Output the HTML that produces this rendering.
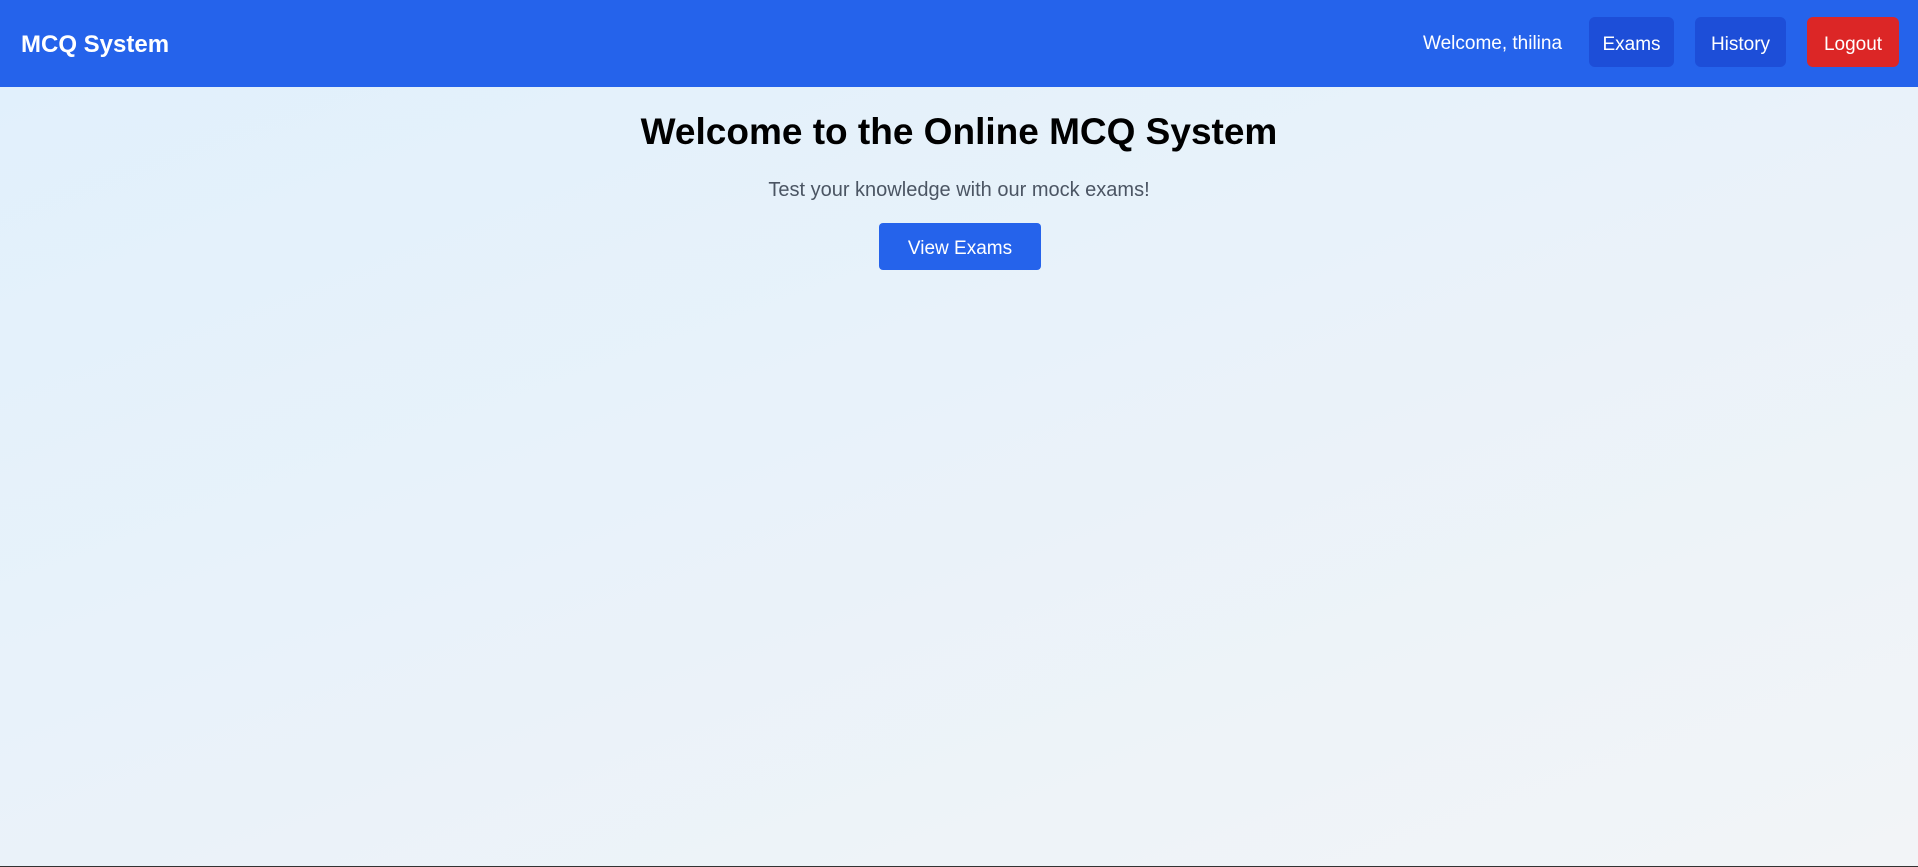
<!DOCTYPE html>
<html><head><meta charset="utf-8"><style>
*{margin:0;padding:0;box-sizing:border-box}
html,body{width:1918px;height:867px;overflow:hidden}
body{font-family:"Liberation Sans",sans-serif;background:linear-gradient(160deg,#e0f0fc 0%,#f2f4f7 100%);position:relative}
nav{position:absolute;left:0;top:0;width:1918px;height:87px;background:#2563eb;color:#fff}
.logo{position:absolute;left:21px;top:30px;font-size:24px;font-weight:bold;line-height:30px}
.wel{position:absolute;left:1423px;top:32px;font-size:19px;line-height:24px}
.b{position:absolute;top:17px;height:50px;border-radius:6px;font-size:19px;line-height:50px;padding-top:3px;text-align:center;color:#fff}
h1{position:absolute;left:0;width:1918px;top:107px;text-align:center;font-size:37px;line-height:50px;color:#000}
p{position:absolute;left:0;width:1918px;top:178px;text-align:center;font-size:20px;line-height:24px;color:#4b5563}
.v{position:absolute;left:879px;top:223px;width:162px;height:47px;background:#2563eb;border-radius:4px;color:#fff;font-size:19px;line-height:47px;padding-top:2px;text-align:center}
.line{position:absolute;left:0;bottom:0;width:1918px;height:1px;background:#333}
</style></head><body>
<nav>
<div class="logo">MCQ System</div>
<div class="wel">Welcome, thilina</div>
<div class="b" style="left:1589px;width:85px;background:#1d4ed8">Exams</div>
<div class="b" style="left:1695px;width:91px;background:#1d4ed8">History</div>
<div class="b" style="left:1807px;width:92px;background:#dc2626">Logout</div>
</nav>
<h1>Welcome to the Online MCQ System</h1>
<p>Test your knowledge with our mock exams!</p>
<div class="v">View Exams</div>
<div class="line"></div>
</body></html>
